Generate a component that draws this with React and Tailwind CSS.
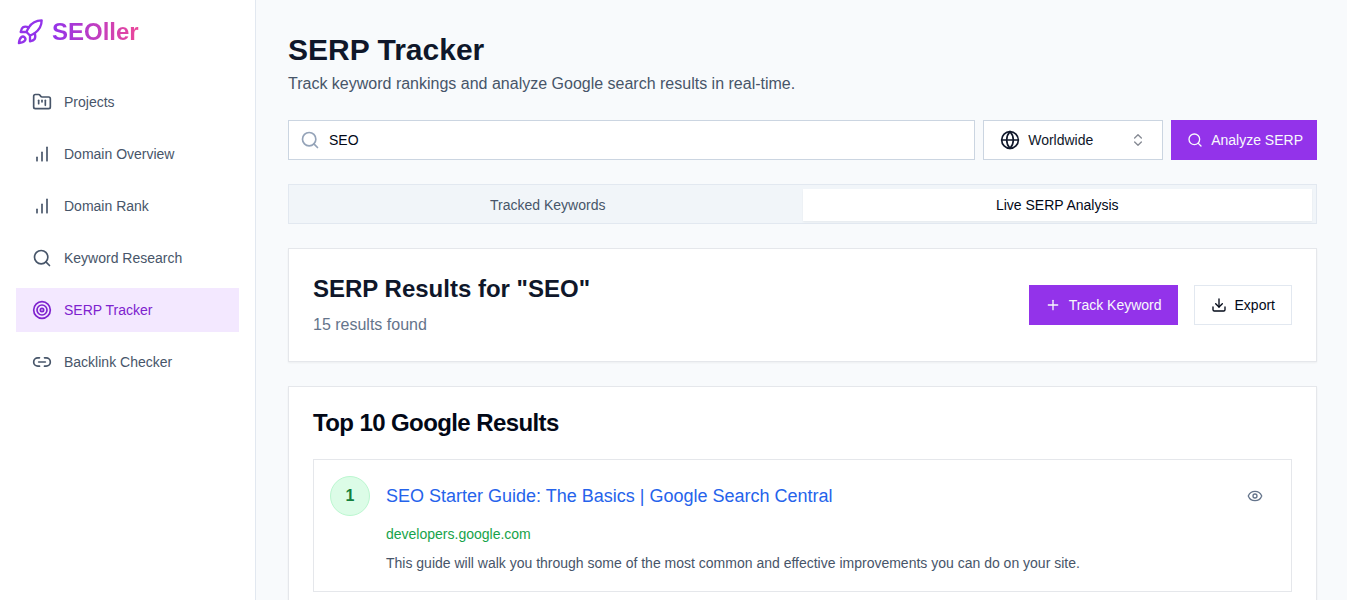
import React from "react";
import {
  ChevronsUpDown,
  Download,
  Eye,
  FolderKanban,
  Globe,
  Link2,
  Plus,
  Rocket,
  Search,
  Target,
} from "lucide-react";

function Bars({ className }) {
  return (
    <svg
      className={className}
      viewBox="0 0 24 24"
      fill="none"
      stroke="currentColor"
      strokeWidth="2"
      strokeLinecap="round"
      strokeLinejoin="round"
      aria-hidden="true"
    >
      <line x1="12" x2="12" y1="20" y2="10" />
      <line x1="18" x2="18" y1="20" y2="4" />
      <line x1="6" x2="6" y1="20" y2="16" />
    </svg>
  );
}

const NAV = [
  { label: "Projects", icon: FolderKanban },
  { label: "Domain Overview", icon: Bars },
  { label: "Domain Rank", icon: Bars },
  { label: "Keyword Research", icon: Search },
  { label: "SERP Tracker", icon: Target, active: true },
  { label: "Backlink Checker", icon: Link2 },
];

const RESULTS = [
  {
    rank: 1,
    title: "SEO Starter Guide: The Basics | Google Search Central",
    domain: "developers.google.com",
    text: "This guide will walk you through some of the most common and effective improvements you can do on your site.",
  },
];

function Sidebar() {
  return (
    <aside className="w-64 shrink-0 border-r border-[#e2e8f0] bg-white p-4">
      <a href="#home" className="flex items-center gap-2 text-[#9333ea]">
        <Rocket className="size-7" />
        <span className="bg-linear-to-r/srgb from-[#9333ea] to-[#ec4899] bg-clip-text text-2xl font-bold text-transparent">
          SEOller
        </span>
      </a>
      <nav className="mt-8 flex flex-col gap-2">
        {NAV.map(({ label, icon: Icon, active }) => (
          <a
            key={label}
            href={"#" + label.toLowerCase().replace(" ", "-")}
            aria-current={active ? "page" : undefined}
            className={
              active
                ? "flex items-center gap-3 bg-[#f3e8ff] px-4 py-3 text-sm text-[#7e22ce]"
                : "flex items-center gap-3 px-4 py-3 text-sm text-[#475569]"
            }
          >
            <Icon className="size-5" />
            {label}
          </a>
        ))}
      </nav>
    </aside>
  );
}

function SearchBar() {
  return (
    <form className="mt-6 flex gap-2" onSubmit={(e) => e.preventDefault()}>
      <div className="relative flex-1">
        <Search className="pointer-events-none absolute left-3 top-1/2 size-5 -translate-y-1/2 text-[#94a3b8]" />
        <input
          type="text"
          aria-label="Keyword"
          defaultValue="SEO"
          className="h-10 w-full border border-[#cbd5e1] bg-white pl-10 pr-3 text-sm text-[#020817] outline-none"
        />
      </div>
      <div className="relative w-[180px] text-[#0f172a]">
        <Globe className="pointer-events-none absolute left-[17px] top-1/2 size-5 -translate-y-1/2" />
        <select
          aria-label="Location"
          className="h-10 w-full appearance-none border border-[#cbd5e1] bg-white pl-11 pr-10 text-sm outline-none"
        >
          <option>Worldwide</option>
        </select>
        <ChevronsUpDown className="pointer-events-none absolute right-[17px] top-1/2 size-4 -translate-y-1/2 opacity-50" />
      </div>
      <button type="submit" className="flex h-10 items-center gap-2 bg-[#9333ea] pl-4 pr-3.5 text-sm text-[#f8fafc]">
        <Search className="size-4" />
        Analyze SERP
      </button>
    </form>
  );
}

function Tabs() {
  return (
    <div role="tablist" className="mt-6 grid h-10 grid-cols-2 border border-[#e2e8f0] bg-[#f1f5f9] p-1 text-sm">
      <button type="button" role="tab" aria-selected="false" className="h-8 px-3 text-[#475569]">
        Tracked Keywords
      </button>
      <button type="button" role="tab" aria-selected="true" className="h-8 bg-white px-3 text-[#020817] shadow-xs">
        Live SERP Analysis
      </button>
    </div>
  );
}

function Result({ rank, title, domain, text }) {
  return (
    <article className="flex items-start gap-4 border border-[#e5e7eb] p-4">
      <div className="flex size-10 shrink-0 items-center justify-center rounded-full border border-[#bbf7d0] bg-[#dcfce7] font-bold text-[#15803d]">
        {rank}
      </div>
      <div className="flex min-w-0 flex-1 flex-col gap-2">
        <div className="flex items-center justify-between gap-4">
          <a href="#result" className="text-lg text-[#2563eb]">
            {title}
          </a>
          <button type="button" aria-label="View details" className="flex size-10 shrink-0 items-center justify-center text-[#64748b]">
            <Eye className="size-4" />
          </button>
        </div>
        <p className="text-sm text-[#16a34a]">{domain}</p>
        <p className="text-sm leading-[23px] text-[#475569]">{text}</p>
      </div>
    </article>
  );
}

export default function App() {
  return (
    <div className="flex min-h-screen bg-[#f8fafc] font-['Liberation_Sans',Arial,sans-serif] text-[#020817]">
      <Sidebar />
      <main className="min-w-0 flex-1 py-8 pl-8 pr-[30px]">
        <h1 className="text-3xl font-bold text-[#0f172a]">SERP Tracker</h1>
        <p className="mt-1 text-[#475569]">
          Track keyword rankings and analyze Google search results in real-time.
        </p>
        <SearchBar />
        <Tabs />
        <section className="mt-6 flex items-center justify-between gap-4 border border-[#e5e7eb] bg-white p-6 shadow-xs">
          <div>
            <h2 className="text-2xl font-bold text-[#0f172a]">SERP Results for "SEO"</h2>
            <p className="mt-2 text-[#64748b]">15 results found</p>
          </div>
          <div className="flex gap-4">
            <button type="button" className="flex h-10 items-center gap-2 bg-[#9333ea] px-4 text-sm text-[#f8fafc]">
              <Plus className="size-4" />
              Track Keyword
            </button>
            <button type="button" className="flex h-10 items-center gap-2 border border-[#e2e8f0] bg-white px-4 text-sm">
              <Download className="size-4" />
              Export
            </button>
          </div>
        </section>
        <section className="mt-6 border border-[#e5e7eb] bg-white p-6 shadow-xs">
          <h2 className="text-2xl leading-6 font-bold tracking-tight">Top 10 Google Results</h2>
          <div className="mt-6 flex flex-col gap-4">
            {RESULTS.map((r) => (
              <Result key={r.rank} {...r} />
            ))}
          </div>
        </section>
      </main>
    </div>
  );
}
